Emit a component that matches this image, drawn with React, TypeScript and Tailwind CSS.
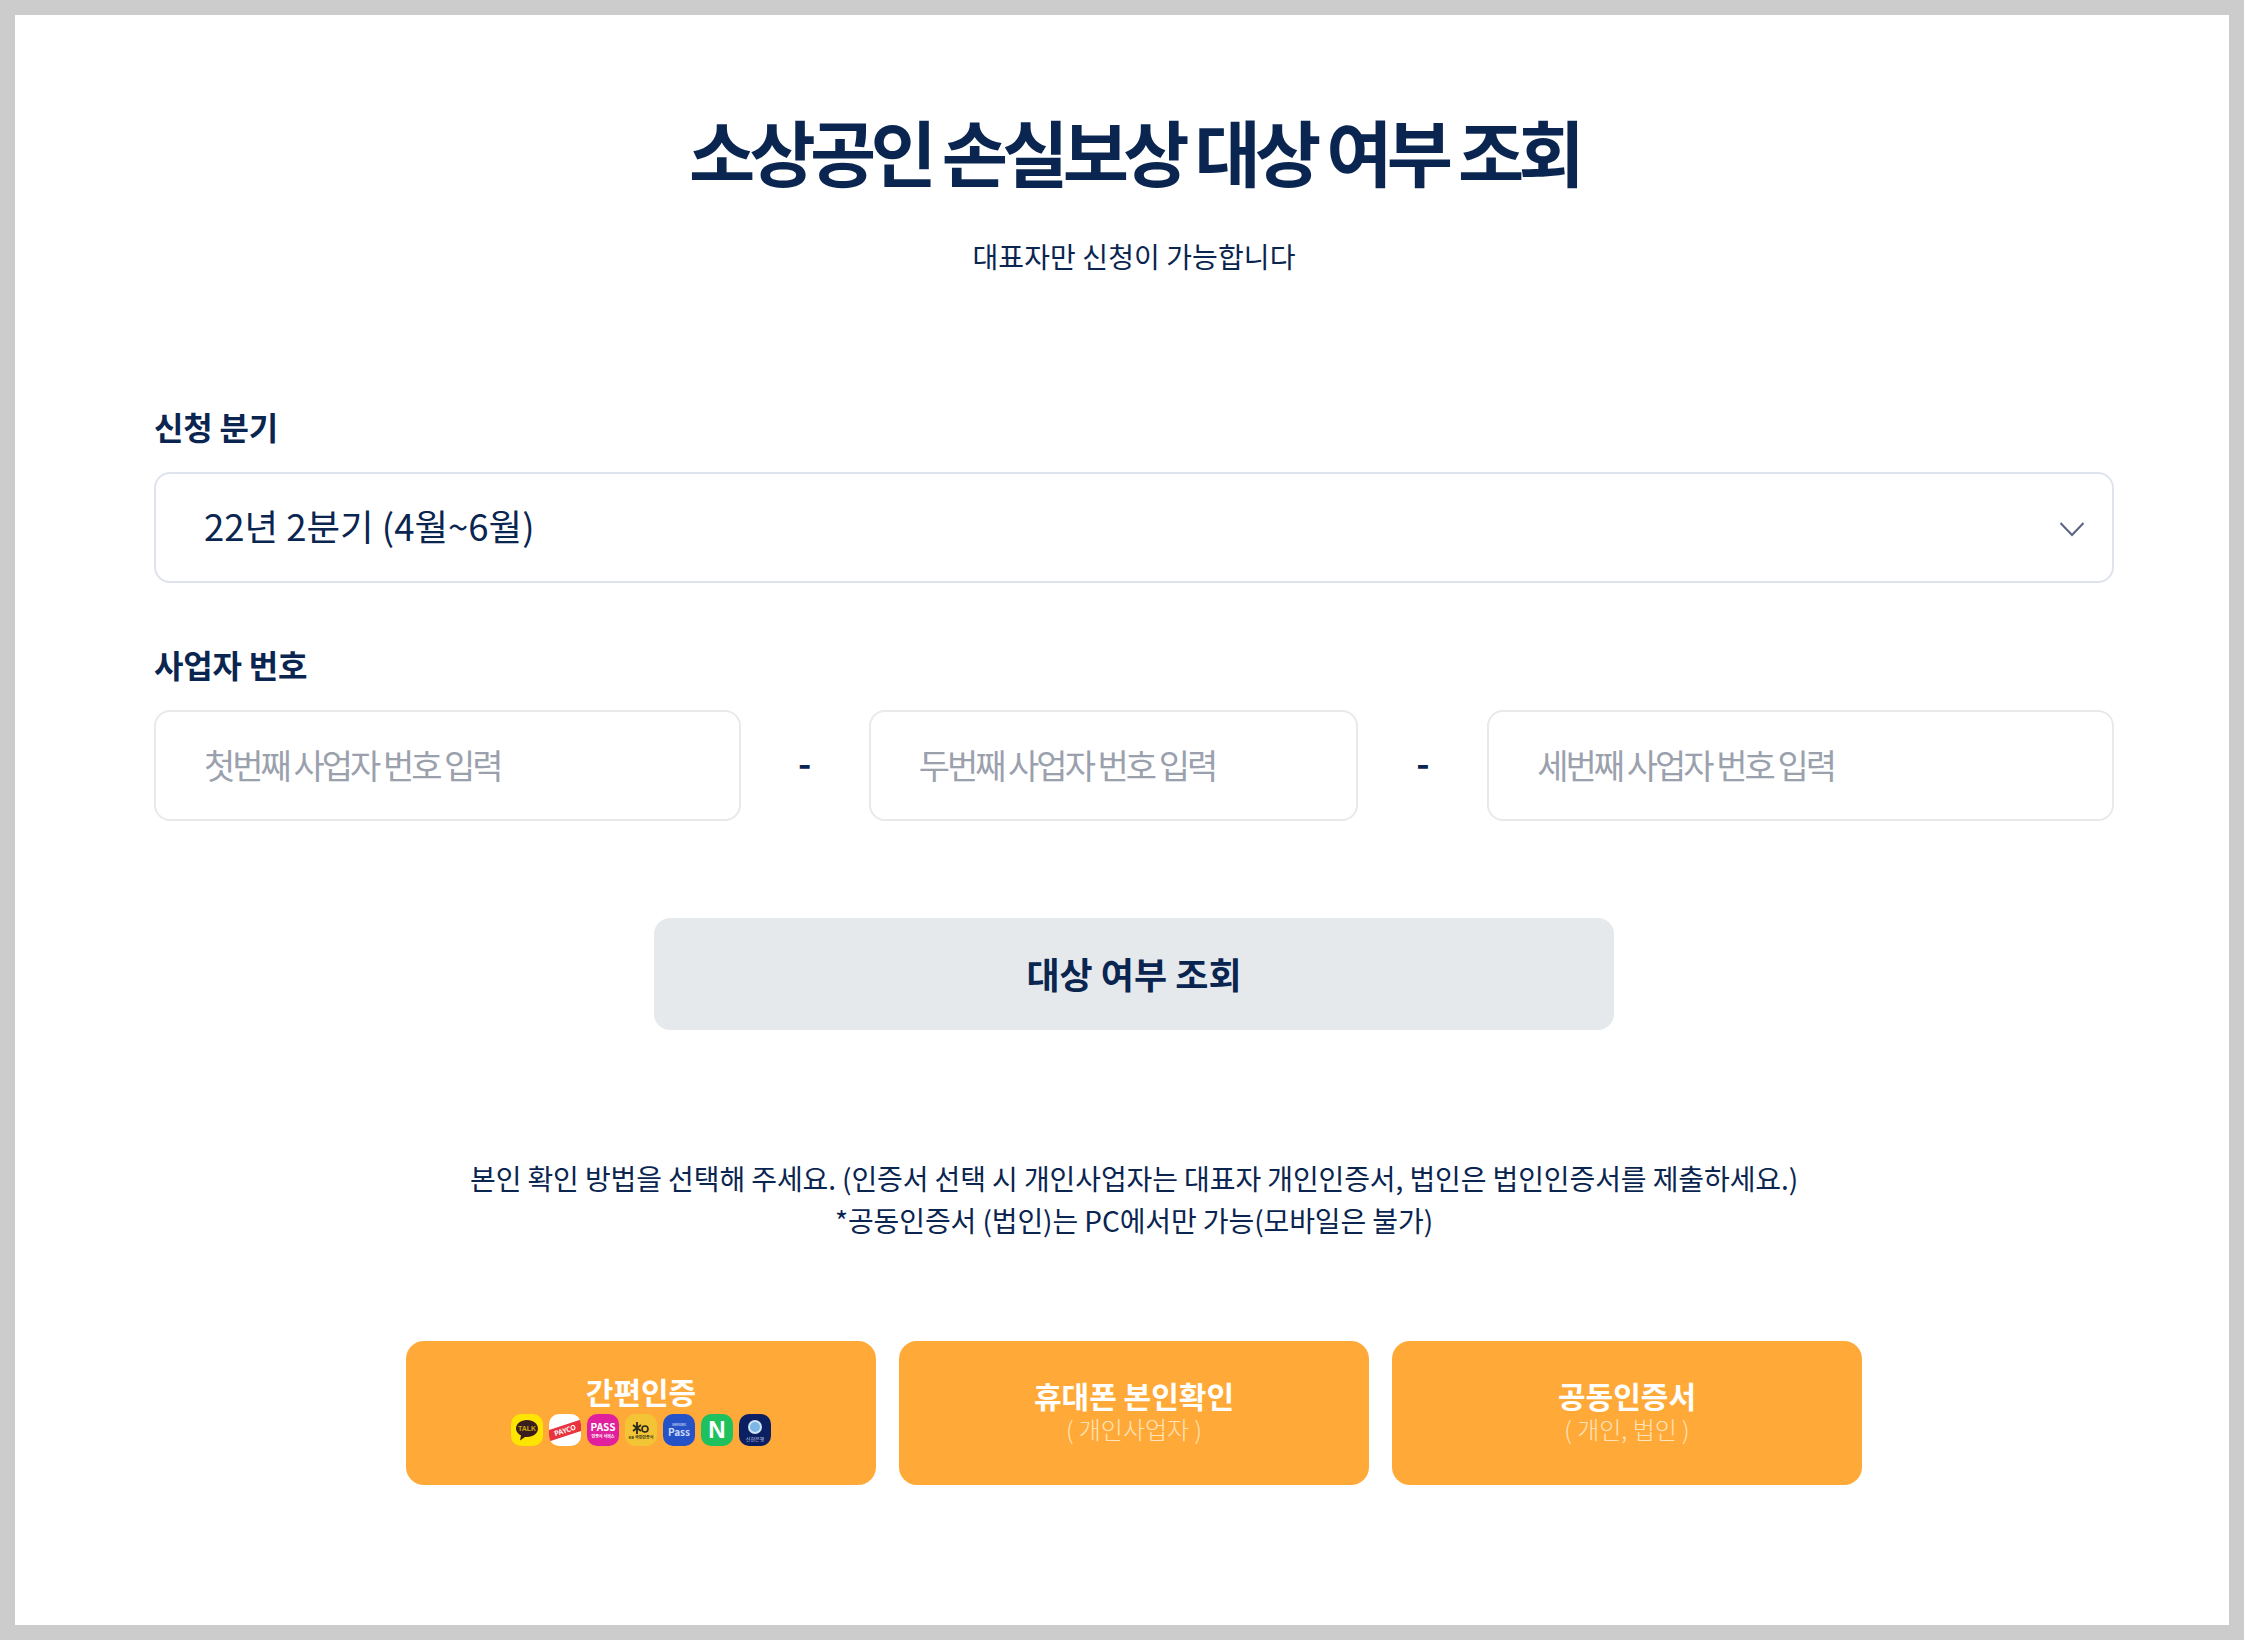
import React from "react";

const font = { fontFamily: '"Noto Sans CJK KR", "Noto Sans", sans-serif' };

function Icons() {
  return (
    <div className="flex gap-[6px] h-[32px] mb-[8px]">
      <div className="w-[32px] h-[32px] rounded-[10px] bg-[#fee500] flex items-center justify-center">
        <svg width="26" height="26" viewBox="0 0 26 26">
          <path d="M13 3C6.6 3 2 6.9 2 11.5c0 3 2 5.5 5 7l-1 5 5-3.6c.7.1 1.3.1 2 .1 6.4 0 11-3.9 11-8.5S19.400 3 13 3z" fill="#3a1d1d" />
          <text x="13" y="14" fontSize="7" fontWeight="700" textAnchor="middle" fill="#c9a90a" fontFamily="Liberation Sans">TALK</text>
        </svg>
      </div>
      <div className="w-[32px] h-[32px] rounded-[10px] bg-white overflow-hidden flex items-center justify-center">
        <div className="w-[38px] h-[11px] bg-[#e8343f] -rotate-[18deg] shrink-0 flex items-center justify-center text-[7px] leading-none font-bold text-white whitespace-nowrap">PAYCO</div>
      </div>
      <div className="w-[32px] h-[32px] rounded-[10px] bg-[#e0209c] flex flex-col items-center justify-center text-white font-bold leading-none">
        <span className="text-[10px]">PASS</span>
        <span className="text-[4px] mt-[2px]">인증서 서비스</span>
      </div>
      <div className="w-[32px] h-[32px] rounded-[10px] bg-[#f2c436] flex flex-col items-center justify-center">
        <svg width="18" height="14" viewBox="0 0 18 14">
          <path d="M5 1v12M1 4l8 6M9 4l-8 6" stroke="#2a2a1a" strokeWidth="1.800" fill="none" />
          <circle cx="13" cy="8" r="3" fill="none" stroke="#2a2a1a" strokeWidth="1.600" />
        </svg>
        <span className="text-[4px] leading-none text-[#3a3a1a] font-bold">KB 국민인증서</span>
      </div>
      <div className="w-[32px] h-[32px] rounded-[10px] bg-[#2553c7] flex flex-col items-center justify-center text-white leading-none">
        <span className="text-[3px]">SAMSUNG</span>
        <span className="text-[10px] font-bold text-[#cfdcf8]">Pass</span>
      </div>
      <div className="w-[32px] h-[32px] rounded-[10px] bg-[#1fc15e] flex items-center justify-center">
        <span className="text-white text-[24px] leading-none font-bold" style={{ fontFamily: '"Liberation Sans", sans-serif' }}>N</span>
      </div>
      <div className="w-[32px] h-[32px] rounded-[10px] bg-[#0b1f63] flex flex-col items-center justify-center">
        <div className="w-[14px] h-[14px] rounded-full bg-[#7db6e6] border-2 border-[#cfe4f5]" />
        <span className="text-[5px] leading-none mt-[2px] text-[#cdd7ee]">신한은행</span>
      </div>
    </div>
  );
}

function AuthButton({ title, titleClass, children }: { title: string; titleClass?: string; children: React.ReactNode }) {
  return (
    <button className="w-[470px] h-[144px] rounded-[18px] bg-[#ffaa38] flex flex-col items-center justify-center text-white">
      <div className={`text-[30px] leading-[38px] font-bold tracking-[0px] ${titleClass ?? ""}`}>{title}</div>
      {children}
    </button>
  );
}

function NumberInput({ placeholder, className }: { placeholder: string; className: string }) {
  return (
    <input
      placeholder={placeholder}
      className={`h-[111px] rounded-[16px] border-2 border-[#e8e9eb] px-[48px] pb-[2px] text-[34px] tracking-[-3px] text-[#0a2550] placeholder:text-[#9aa1ad] bg-white outline-none ${className}`}
    />
  );
}

export default function App() {
  return (
    <div style={font} className="h-[1640px] border-[15px] border-[#cccccc] bg-white text-[#0a2550] pl-[139px] pr-[115px] flex flex-col">
      <h1 className="mt-[85px] text-center text-[72px] leading-[100px] font-bold tracking-[-5.700px]">소상공인 손실보상 대상 여부 조회</h1>
      <p className="mt-[36px] text-center text-[28px] leading-[40px] tracking-[0.1px]">대표자만 신청이 가능합니다</p>

      <label className="mt-[128px] text-[32px] leading-[44px] font-bold tracking-[-0.2px]">신청 분기</label>
      <div className="mt-[24px] h-[111px] rounded-[16px] border-2 border-[#dfe3ee] pl-[48px] pr-[27px] flex items-center justify-between">
        <span className="text-[36.500px] tracking-[0px] mb-[3px]">22년 2분기 (4월~6월)</span>
        <svg width="26" height="16" viewBox="0 0 26 16" fill="none" className="mt-[2px]">
          <path d="M1.500 2L13 14L24.500 2" stroke="#5a6480" strokeWidth="2" />
        </svg>
      </div>

      <label className="mt-[59px] text-[32px] leading-[44px] font-bold tracking-[-0.2px]">사업자 번호</label>
      <div className="mt-[24px] flex items-center">
        <NumberInput placeholder="첫번째 사업자 번호 입력" className="w-[587px]" />
        <span className="w-[128px] text-center text-[36px] font-bold pb-[10px]">-</span>
        <NumberInput placeholder="두번째 사업자 번호 입력" className="w-[490px]" />
        <span className="w-[129px] text-center text-[36px] font-bold pb-[10px]">-</span>
        <NumberInput placeholder="세번째 사업자 번호 입력" className="w-[627px]" />
      </div>

      <button className="mt-[97px] self-center w-[960px] h-[112px] rounded-[16px] bg-[#e5e9ec] pb-[3px] text-[36px] font-bold tracking-[0px]">대상 여부 조회</button>

      <div className="mt-[127px] text-center text-[28px] leading-[42px] tracking-[-0.1px]">
        <p>본인 확인 방법을 선택해 주세요. (인증서 선택 시 개인사업자는 대표자 개인인증서, 법인은 법인인증서를 제출하세요.)</p>
        <p>*공동인증서 (법인)는 PC에서만 가능(모바일은 불가)</p>
      </div>

      <div className="mt-[100px] flex justify-center gap-[23px]">
        <AuthButton title="간편인증" titleClass="mb-[4px]"><Icons /></AuthButton>
        <AuthButton title="휴대폰 본인확인"><span className="text-[24px] leading-[30px] mb-[7px] font-light text-[#ffe3bb]">( 개인사업자 )</span></AuthButton>
        <AuthButton title="공동인증서"><span className="text-[24px] leading-[30px] mb-[7px] font-light text-[#ffe3bb]">( 개인, 법인 )</span></AuthButton>
      </div>
    </div>
  );
}
